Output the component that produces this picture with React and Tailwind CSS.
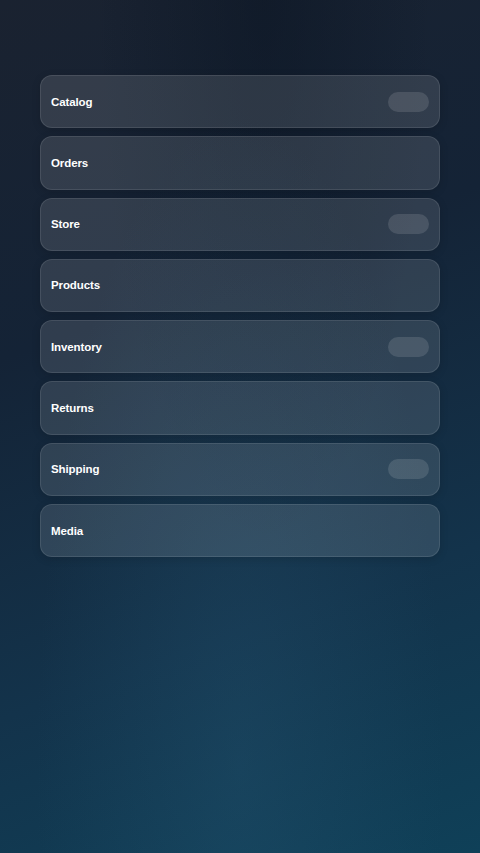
export default function App() {
  const items = [
    { label: "Catalog", toggle: true },
    { label: "Orders", toggle: false },
    { label: "Store", toggle: true },
    { label: "Products", toggle: false },
    { label: "Inventory", toggle: true },
    { label: "Returns", toggle: false },
    { label: "Shipping", toggle: true },
    { label: "Media", toggle: false },
  ];
  return (
    <div
      className="relative w-full min-h-[853px] overflow-hidden bg-[linear-gradient(160deg,#1a2230_0%,#142336_35%,#13334b_70%,#0f4058_100%)]"
      style={{ fontFamily: '"Liberation Sans", Arial, sans-serif' }}
    >
      <div className="pointer-events-none absolute inset-0 bg-[radial-gradient(ellipse_at_55%_0%,rgba(8,18,32,0.45),transparent_45%)]" />
      <div className="pointer-events-none absolute inset-0 bg-[radial-gradient(ellipse_at_50%_90%,rgba(40,90,120,0.3),transparent_60%)]" />
      <div className="relative flex flex-col gap-2 px-10 pt-[75px]">
        {items.map((it) => (
          <div
            key={it.label}
            className="flex h-[53.3px] items-center justify-between rounded-xl border border-white/10 bg-white/[0.12] pl-[10px] pr-[10px] shadow-[0_2px_8px_rgba(0,0,0,0.15)]"
          >
            <span className="pt-px text-[11.5px] font-bold tracking-[-0.1px] text-white">{it.label}</span>
            {it.toggle && (
              <span className="h-5 w-[41px] rounded-full bg-white/[0.12]" />
            )}
          </div>
        ))}
      </div>
    </div>
  );
}
